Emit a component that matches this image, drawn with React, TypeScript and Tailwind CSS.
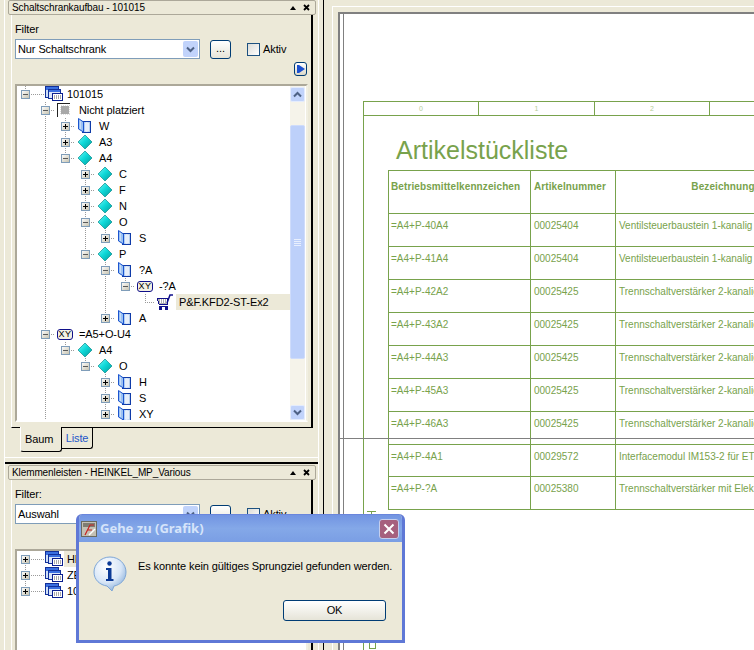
import React from "react";

const sans = "font-['Liberation_Sans',sans-serif]";

type Row = {
  level: number;
  exp?: "+" | "-";
  icon: "project" | "none" | "book" | "diamond" | "xy" | "cart";
  text: string;
  guides?: number[];
  up?: boolean;
  down?: boolean;
  selected?: boolean;
};

const topTree: Row[] = [
  { level: 0, exp: "-", icon: "project", text: "101015", up: true },
  { level: 1, exp: "-", icon: "none", text: "Nicht platziert", up: true, down: true },
  { level: 2, exp: "+", icon: "book", text: "W", guides: [1], up: true, down: true },
  { level: 2, exp: "+", icon: "diamond", text: "A3", guides: [1], up: true, down: true },
  { level: 2, exp: "-", icon: "diamond", text: "A4", guides: [1], up: true },
  { level: 3, exp: "+", icon: "diamond", text: "C", guides: [1], up: true, down: true },
  { level: 3, exp: "+", icon: "diamond", text: "F", guides: [1], up: true, down: true },
  { level: 3, exp: "+", icon: "diamond", text: "N", guides: [1], up: true, down: true },
  { level: 3, exp: "-", icon: "diamond", text: "O", guides: [1], up: true, down: true },
  { level: 4, exp: "+", icon: "book", text: "S", guides: [1, 3], up: true },
  { level: 3, exp: "-", icon: "diamond", text: "P", guides: [1], up: true },
  { level: 4, exp: "-", icon: "book", text: "?A", guides: [1], up: true, down: true },
  { level: 5, exp: "-", icon: "xy", text: "-?A", guides: [1, 4], up: true },
  { level: 6, icon: "cart", text: "P&F.KFD2-ST-Ex2", guides: [1, 4], up: true, selected: true },
  { level: 4, exp: "+", icon: "book", text: "A", guides: [1], up: true },
  { level: 1, exp: "-", icon: "xy", text: "=A5+O-U4", up: true, down: true },
  { level: 2, exp: "-", icon: "diamond", text: "A4", guides: [1], up: true },
  { level: 3, exp: "-", icon: "diamond", text: "O", guides: [1], up: true },
  { level: 4, exp: "+", icon: "book", text: "H", guides: [1], up: true, down: true },
  { level: 4, exp: "+", icon: "book", text: "S", guides: [1], up: true, down: true },
  { level: 4, exp: "+", icon: "book", text: "XY", guides: [1], up: true, down: true },
];

const bottomTree: Row[] = [
  { level: 0, exp: "+", icon: "project", text: "HE", down: true, selected: true },
  { level: 0, exp: "+", icon: "project", text: "ZE", up: true, down: true },
  { level: 0, exp: "+", icon: "project", text: "10", up: true },
];

const parts = [
  ["=A4+P-40A4", "00025404", "Ventilsteuerbaustein 1-kanalig", "h-[33px]"],
  ["=A4+P-41A4", "00025404", "Ventilsteuerbaustein 1-kanalig", "h-[33px]"],
  ["=A4+P-42A2", "00025425", "Trennschaltverstärker 2-kanalig", "h-[33px]"],
  ["=A4+P-43A2", "00025425", "Trennschaltverstärker 2-kanalig", "h-[33px]"],
  ["=A4+P-44A3", "00025425", "Trennschaltverstärker 2-kanalig", "h-[33px]"],
  ["=A4+P-45A3", "00025425", "Trennschaltverstärker 2-kanalig", "h-[33px]"],
  ["=A4+P-46A3", "00025425", "Trennschaltverstärker 2-kanalig", "h-[33px]"],
  ["=A4+P-4A1", "00029572", "Interfacemodul IM153-2 für ET", "h-[32px]"],
  ["=A4+P-?A", "00025380", "Trennschaltverstärker mit Elek", "h-[33px]"],
];

const Gradients = () => (
  <svg width="0" height="0" className="absolute">
    <defs>
      <linearGradient id="boxFill" x1="0" y1="0" x2="1" y2="1">
        <stop offset="0" stopColor="#ffffff" />
        <stop offset="1" stopColor="#c4c0ac" />
      </linearGradient>
      <linearGradient id="gem" x1="0" y1="0" x2="1" y2="1">
        <stop offset="0" stopColor="#7ff5f5" />
        <stop offset="0.45" stopColor="#10dada" />
        <stop offset="1" stopColor="#009a9a" />
      </linearGradient>
      <linearGradient id="page" x1="0" y1="0" x2="1" y2="0">
        <stop offset="0" stopColor="#7fb0ee" />
        <stop offset="0.5" stopColor="#dfeafa" />
        <stop offset="1" stopColor="#a8c4e8" />
      </linearGradient>
      <radialGradient id="bubble" cx="0.38" cy="0.28" r="0.78">
        <stop offset="0" stopColor="#ffffff" />
        <stop offset="0.6" stopColor="#d8e6f7" />
        <stop offset="1" stopColor="#86add9" />
      </radialGradient>
    </defs>
  </svg>
);

const Connector = ({ row }: { row: Row }) => (
  <svg width="20" height="16" className="shrink-0" shapeRendering="crispEdges">
    {row.up && <line x1="10.5" y1="0" x2="10.5" y2="8" stroke="#9a9a9a" strokeDasharray="1 1" />}
    {row.down && <line x1="10.5" y1="8" x2="10.5" y2="16" stroke="#9a9a9a" strokeDasharray="1 1" />}
    <line x1="10" y1="8.5" x2="20" y2="8.5" stroke="#9a9a9a" strokeDasharray="1 1" />
    {row.exp && (
      <>
        <rect x="6.5" y="4.5" width="8" height="8" fill="url(#boxFill)" stroke="#7f9db9" />
        <line x1="8" y1="8.5" x2="13" y2="8.5" stroke={row.exp === "+" ? "#000" : "#5a5a5a"} />
        {row.exp === "+" && <line x1="10.5" y1="6" x2="10.5" y2="11" stroke="#000" />}
      </>
    )}
  </svg>
);

const Guide = ({ on }: { on: boolean }) => (
  <svg width="20" height="16" className="shrink-0" shapeRendering="crispEdges">
    {on && <line x1="10.5" y1="0" x2="10.5" y2="16" stroke="#9a9a9a" strokeDasharray="1 1" />}
  </svg>
);

const ProjectIcon = () => (
  <svg width="28" height="16" className="shrink-0">
    <line x1="0" y1="8.5" x2="10" y2="8.5" stroke="#9a9a9a" strokeDasharray="1 1" shapeRendering="crispEdges" />
    <rect x="10.5" y="0.5" width="13" height="11" fill="#cfe0f8" stroke="#12309a" />
    <rect x="11" y="1" width="12" height="3" fill="#3a6fe0" />
    <rect x="13.5" y="3.5" width="12" height="9" fill="#dbe6fa" stroke="#12309a" />
    <rect x="14" y="4" width="11" height="2" fill="#3a6fe0" />
    <rect x="17.5" y="7.5" width="10" height="7" fill="#fff" stroke="#0a1f8f" />
    <path d="M19 10h7M19 12h7" stroke="#555" strokeDasharray="1 1" />
  </svg>
);

const NoneIcon = () => (
  <svg width="20" height="16" className="shrink-0" shapeRendering="crispEdges">
    <path d="M2.5 15V1.5H15" fill="none" stroke="#222" />
    <rect x="6" y="4" width="8" height="8" fill="#a8a8a8" />
    <rect x="5.5" y="3.5" width="9" height="9" fill="none" stroke="#ddd" strokeDasharray="1 1" />
  </svg>
);

const BookIcon = () => (
  <svg width="20" height="16" className="shrink-0">
    <rect x="7.5" y="3.5" width="8" height="11" fill="url(#page)" stroke="#0f3ba8" />
    <rect x="10" y="5" width="4" height="8" fill="#e6eefa" />
    <path d="M3.5 0.5L8.5 4V14L3.5 11Z" fill="#9cc2f2" stroke="#1c55d0" />
    <path d="M5.5 3.5V11" stroke="#f4f8ff" strokeDasharray="1 1" />
  </svg>
);

const DiamondIcon = () => (
  <svg width="20" height="16" className="shrink-0">
    <polygon points="10,1 17,8 10,15 3,8" fill="url(#gem)" stroke="#0a8c8c" strokeWidth="0.7" />
  </svg>
);

const XyIcon = () => (
  <span className="flex h-[11px] w-[16px] shrink-0 items-center justify-center rounded-[3px] border border-[#10108a] bg-[#f2f0e4] text-[9px] leading-none tracking-[0.5px] text-black">
    XY
  </span>
);

const CartIcon = () => (
  <svg width="20" height="16" className="shrink-0" shapeRendering="crispEdges">
    <path d="M2 4H12V10H4Z" fill="#b0b0b0" stroke="#10108a" />
    <path d="M5 5v4M7 5v4M9 5v4M11 5v4" stroke="#fff" />
    <path d="M12 9L15 1H18" fill="none" stroke="#10108a" strokeWidth="1.5" shapeRendering="auto" />
    <path d="M4 12H13" stroke="#10108a" />
    <rect x="4" y="13" width="3" height="3" fill="#10108a" />
    <rect x="10" y="13" width="3" height="3" fill="#10108a" />
  </svg>
);

const RowIcon = ({ kind }: { kind: Row["icon"] }) => {
  if (kind === "project") return <ProjectIcon />;
  if (kind === "none") return <NoneIcon />;
  if (kind === "book") return <BookIcon />;
  if (kind === "diamond") return <DiamondIcon />;
  if (kind === "cart") return <CartIcon />;
  return (
    <span className="flex w-5 shrink-0 justify-center">
      <XyIcon />
    </span>
  );
};

const TreeRow = ({ row }: { row: Row }) => (
  <div className="flex h-4 items-center">
    {Array.from({ length: row.level }).map((_, k) => (
      <Guide key={k} on={(row.guides ?? []).includes(k)} />
    ))}
    <Connector row={row} />
    <RowIcon kind={row.icon} />
    {row.selected ? (
      <span className="ml-px h-4 flex-1 bg-[#ece9d8] pl-[3px] leading-4 whitespace-nowrap">{row.text}</span>
    ) : (
      <span className="ml-1 leading-4 whitespace-nowrap">{row.text}</span>
    )}
  </div>
);

const Chevron = ({ up }: { up?: boolean }) => (
  <svg width="9" height="7" viewBox="0 0 9 7">
    <path
      d={up ? "M1 5.5L4.5 2L8 5.5" : "M1 1.5L4.5 5L8 1.5"}
      fill="none"
      stroke="#4d6185"
      strokeWidth="2"
    />
  </svg>
);

const ScrollBar = () => (
  <div className="mr-px flex w-[15px] shrink-0 flex-col bg-[#f5f3ea]">
    <div className="mt-px flex h-[15px] items-center justify-center rounded-[2px] border border-[#e4ecfd] bg-[#c1d3fb]">
      <Chevron up />
    </div>
    <div className="mt-[23px] flex h-[235px] flex-col items-center justify-center gap-px rounded-[2px] border border-[#cfdcfb] bg-[#bdd0fa]">
      <div className="h-px w-[7px] bg-[#e8effe]" />
      <div className="h-px w-[7px] bg-[#e8effe]" />
      <div className="h-px w-[7px] bg-[#e8effe]" />
      <div className="h-px w-[7px] bg-[#e8effe]" />
    </div>
    <div className="mt-[46px] flex h-[15px] items-center justify-center rounded-[2px] border border-[#e4ecfd] bg-[#c1d3fb]">
      <Chevron />
    </div>
  </div>
);

const Panel = ({
  title,
  label,
  combo,
  tree,
  bodyClass,
  treeClass,
  scroll,
}: {
  title: string;
  label: string;
  combo: string;
  tree: Row[];
  bodyClass: string;
  treeClass: string;
  scroll?: boolean;
}) => (
  <>
    <div className="ml-[3px] flex h-[15px] w-[308px] shrink-0 items-center justify-between rounded-[2px] border border-[#aca899] pr-[5px] pl-[3px]">
      <span className="text-[10px] leading-none whitespace-nowrap">{title}</span>
      <div className="flex items-center gap-[7px]">
        <svg width="6" height="4" viewBox="0 0 6 4">
          <path d="M3 0L6 4H0Z" fill="#000" />
        </svg>
        <svg width="7" height="7" viewBox="0 0 7 7">
          <path d="M1 1L6 6M6 1L1 6" stroke="#000" strokeWidth="1.8" />
        </svg>
      </div>
    </div>
    <div className={`ml-[6px] w-[302px] border-r-2 border-l border-r-black border-l-white pt-2 pr-[3px] pl-[3px] ${bodyClass}`}>
      <div className="h-[13px] leading-[13px]">{label}</div>
      <div className="mt-[3px] flex h-5 items-center">
        <div className="flex h-5 w-[185px] shrink-0 items-center justify-between border border-[#7f9db9] bg-white pr-px pl-[2px]">
          <span className="whitespace-nowrap">{combo}</span>
          <div className="flex h-4 w-[15px] items-center justify-center rounded-[2px] bg-[#c1d3fb]">
            <Chevron />
          </div>
        </div>
        <div className="ml-[10px] flex h-[19px] w-[21px] shrink-0 items-center justify-center rounded-[3px] border border-[#003c74] bg-gradient-to-b from-white to-[#e6e4d8] pb-[2px] leading-none">
          ...
        </div>
        <div className="ml-[16px] h-[13px] w-[13px] shrink-0 border border-[#1c5180] bg-gradient-to-br from-[#dcdcd7] to-white" />
        <span className="ml-[3px]">Aktiv</span>
      </div>
      <div className="mt-[3px] flex h-[14px] justify-end pr-px">
        <div className="flex h-[14px] w-[13px] items-center justify-center rounded-[3px] border border-[#003c74] bg-gradient-to-b from-white to-[#dcd8c8]">
          <svg width="8" height="8" viewBox="0 0 8 8">
            <rect x="0" y="0" width="2" height="8" fill="#1c50d0" />
            <path d="M2 0L8 4L2 8Z" fill="#1c50d0" />
          </svg>
        </div>
      </div>
      <div className={`mt-2 flex overflow-hidden border-2 border-t-[#aca899] border-r-[#f1efe2] border-b-white border-l-[#aca899] bg-white ${treeClass}`}>
        <div className="min-w-0 flex-1 overflow-hidden pr-0">
          <div className="-ml-[2px]">
            {tree.map((row, i) => (
              <TreeRow key={i} row={row} />
            ))}
          </div>
        </div>
        {scroll && <ScrollBar />}
      </div>
    </div>
  </>
);

const InfoIcon = () => (
  <svg width="34" height="36" viewBox="0 0 34 36" className="shrink-0">
    <path
      d="M17 1C26 1 33 8 33 16C33 24 27 29 21 30L19 35L14 30C7 29 1 24 1 16C1 8 8 1 17 1Z"
      fill="url(#bubble)"
      stroke="#7ea6d6"
    />
    <circle cx="16.5" cy="7.5" r="2.2" fill="#0c3a96" />
    <path d="M13 12H18.5V23H20.5V25H13V23H15V14H13Z" fill="#0c3a96" />
  </svg>
);

const AppIcon = () => (
  <svg width="16" height="16" viewBox="0 0 16 16" className="shrink-0">
    <rect x="0.5" y="0.5" width="15" height="15" fill="#c4c0b4" stroke="#6a6a60" />
    <rect x="2" y="2" width="12" height="4" fill="#7f7c72" />
    <path d="M4 14L9 4H13M6 9H11" fill="none" stroke="#c82020" strokeWidth="1.2" />
    <path d="M8 14L14 8" stroke="#fff" strokeWidth="1.4" />
  </svg>
);

const Dialog = () => (
  <div className="absolute top-[514px] left-[76px] flex h-[129px] w-[329px] flex-col overflow-hidden rounded-t-[6px] border-x-[3px] border-b-[3px] border-[#5f78d6] bg-[#ece9d8]">
    <div className="flex h-[28px] shrink-0 items-center border-t border-[#6a86dc] bg-gradient-to-b from-[#7294e2] via-[#84a8e8] to-[#7a9ee4] pr-[3px] pl-[2px]">
      <AppIcon />
      <span className="ml-[3px] font-['Noto_Sans',sans-serif] text-[13px] leading-none font-bold tracking-normal text-[#d6e4fa]">Gehe zu (Grafik)</span>
      <div className="ml-auto flex h-5 w-5 items-center justify-center rounded-[3px] border border-[#c4cfee] bg-[#a6607e]">
        <svg width="12" height="12" viewBox="0 0 12 12">
          <path d="M1.5 1.5L10.5 10.5M10.5 1.5L1.5 10.5" stroke="#fff" strokeWidth="2" />
        </svg>
      </div>
    </div>
    <div className="flex flex-1 flex-col">
      <div className="mt-[14px] flex items-start pl-[14px]">
        <InfoIcon />
        <span className="mt-[2px] ml-[11px] leading-[16px] whitespace-nowrap text-black">
          Es konnte kein gültiges Sprungziel gefunden werden.
        </span>
      </div>
      <div className="mt-[8px] flex justify-end pr-4">
        <div className="flex h-[21px] w-[103px] items-center justify-center rounded-[3px] border border-[#003c74] bg-gradient-to-b from-white to-[#e6e4d8]">
          OK
        </div>
      </div>
    </div>
  </div>
);

const Drawing = () => (
  <div className="relative min-w-0 flex-1 border-t-2 border-l-2 border-[#808080] bg-white pl-[3px]">
    <div className="flex h-[640px] flex-col border-l border-[#808080]">
      <div className="mt-[87px] ml-[19px] w-[500px] flex-1 border-t border-l border-[#78a24c] tracking-normal text-[#78a24c]">
        <div className="flex h-[14px] border-b border-[#78a24c] text-[7px] leading-[13px] text-[#b4cc98]">
          <div className="w-[115px] shrink-0 border-r border-[#78a24c] text-center">0</div>
          <div className="w-[116px] shrink-0 border-r border-[#78a24c] text-center">1</div>
          <div className="w-[115px] shrink-0 border-r border-[#78a24c] text-center">2</div>
        </div>
        <div className="ml-[32px] flex h-[54px] items-start pt-[15px] text-[25px] leading-[38px]">Artikelstückliste</div>
        <table className="ml-[24px] table-fixed border-collapse text-[10px] leading-[14px]">
          <colgroup>
            <col className="w-[142px]" />
            <col className="w-[85px]" />
            <col className="w-[215px]" />
          </colgroup>
          <thead>
            <tr className="h-[43px] align-top font-bold tracking-[0.1px]">
              <th className="border border-[#78a24c] pt-[9px] pl-[2px] text-left font-bold whitespace-nowrap">Betriebsmittelkennzeichen</th>
              <th className="border border-[#78a24c] pt-[9px] pl-[3px] text-left font-bold whitespace-nowrap">Artikelnummer</th>
              <th className="border border-[#78a24c] pt-[9px] text-center font-bold whitespace-nowrap">Bezeichnung</th>
            </tr>
          </thead>
          <tbody>
            {parts.map(([tag, num, name, height]) => (
              <tr key={tag} className={`${height} align-top`}>
                <td className="border border-[#78a24c] pt-[5px] pl-[2px] whitespace-nowrap">{tag}</td>
                <td className="border border-[#78a24c] pt-[5px] pl-[3px] whitespace-nowrap">{num}</td>
                <td className="border border-[#78a24c] pt-[5px] pl-[3px] whitespace-nowrap">{name}</td>
              </tr>
            ))}
          </tbody>
        </table>
      </div>
    </div>
    {/* sheet edge and marks lying over the drawing */}
    <div className="absolute top-[424px] right-0 left-0 h-px bg-[#808080]" />
    <svg width="12" height="4" className="absolute top-[497px] left-[27px]" shapeRendering="crispEdges">
      <path d="M0 0.5H9M4.5 0V4" stroke="#78a24c" />
    </svg>
    <svg width="8" height="8" className="absolute top-[628px] left-[29px]" shapeRendering="crispEdges">
      <rect x="0.5" y="0.5" width="6" height="6" fill="none" stroke="#78a24c" />
    </svg>
  </div>
);

export default function App() {
  return (
    <div className={`relative flex h-[650px] w-[754px] overflow-hidden bg-[#ece9d8] text-[11px] tracking-[-0.1px] text-black ${sans}`}>
      <Gradients />
      <div className="ml-1 flex h-full w-[315px] shrink-0 flex-col border-x border-x-white">
        <div className="h-[458px] shrink-0 border-b border-white">
          <Panel
            title="Schaltschrankaufbau - 101015"
            label="Filter"
            combo="Nur Schaltschrank"
            tree={topTree}
            bodyClass="h-[413px] border-b border-b-black"
            treeClass="h-[338px]"
            scroll
          />
          <div className="relative z-10 -mt-px ml-[15px] flex items-start">
            <div className="flex h-[25px] w-[42px] items-center rounded-b-[3px] border-r border-b border-l border-r-black border-b-black border-l-white bg-[#ece9d8] pl-[4px] text-[11px]">
              Baum
            </div>
            <div className="mt-px flex h-[21px] w-[31px] items-center justify-center rounded-br-[3px] border-r border-b border-r-black border-b-black text-[11px] text-[#2456c8]">
              Liste
            </div>
          </div>
        </div>
        <div className="mt-1 h-[2px] shrink-0 bg-black" />
        <div className="mt-px flex min-h-0 flex-1 flex-col">
          <Panel
            title="Klemmenleisten - HEINKEL_MP_Various"
            label="Filter:"
            combo="Auswahl"
            tree={bottomTree}
            bodyClass="min-h-0 flex-1"
            treeClass="h-[110px] pt-0"
          />
        </div>
      </div>
      <div className="ml-1 w-px shrink-0 bg-black" />
      <div className="mt-[6px] ml-2 flex min-w-0 flex-1 border-t border-l border-white pt-[5px] pl-[5px]">
        <Drawing />
      </div>
      <Dialog />
    </div>
  );
}
